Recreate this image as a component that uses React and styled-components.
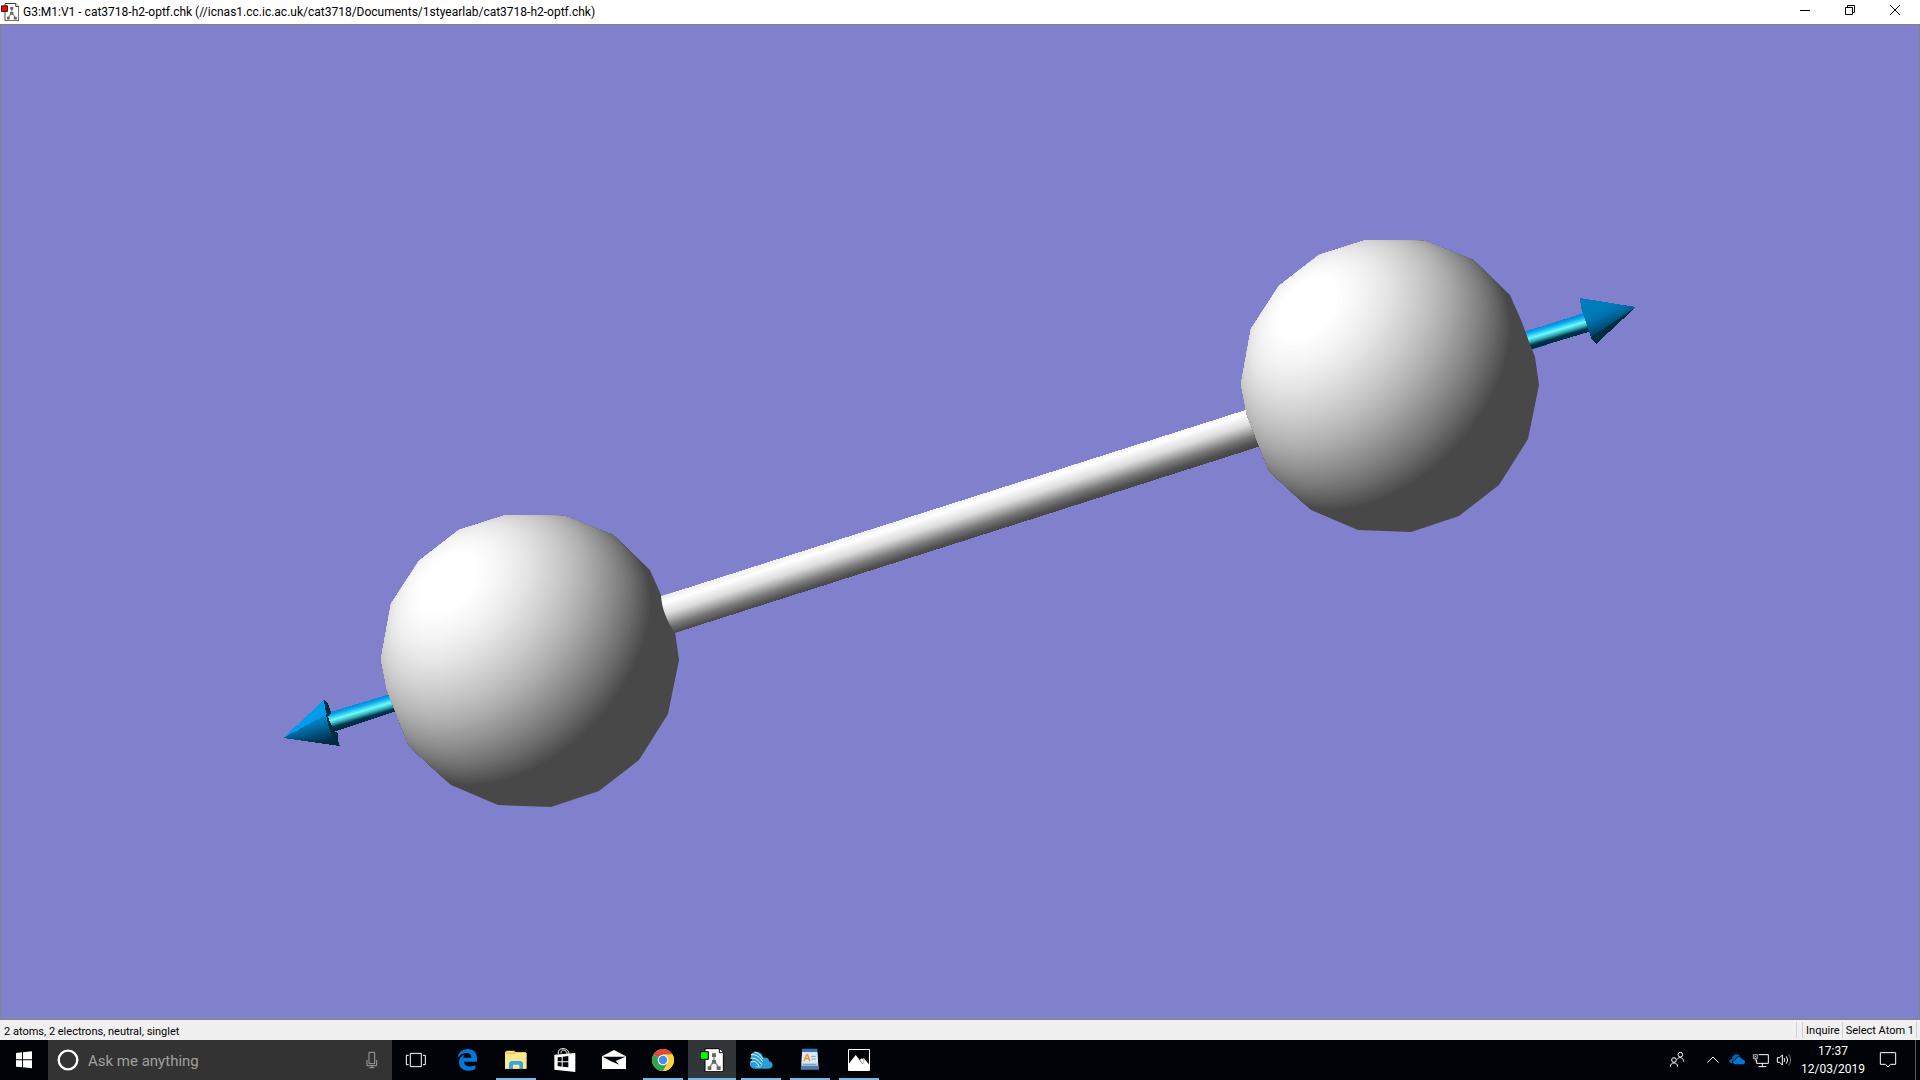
import React from 'react';
import styled, { createGlobalStyle } from 'styled-components';

const SPHERE_RADIUS = 152;
const LIGHT = [-0.56, -0.53, 0.64];
const SHADE_STEPS = 90;

const SPHERE_OUTLINE = [
    [-24, -146], [35, -145], [83, -126], [120, -91], [131, -66], [145, -29],
    [149, -1], [138, 53], [109, 99], [69, 130], [21, 146], [-32, 144],
    [-79, 124], [-121, 85], [-143, 29], [-149, -2], [-139, -57], [-111, -100], [-71, -131],
].map((point) => point.join(',')).join(' ');

// Outline of the part of a sphere whose normals lie within `angle` of the light
const capPath = (angle) => {
    const [lx, ly, lz] = LIGHT;
    const flat = Math.hypot(lx, ly);
    const u = [-ly / flat, lx / flat, 0];
    const v = [(-lz * lx) / flat, (-lz * ly) / flat, flat];
    const points = [];

    for (let i = 0; i < 120; i++) {
        const t = (i / 120) * Math.PI * 2;
        const n = [0, 1, 2].map(
            (k) => LIGHT[k] * Math.cos(angle) + (u[k] * Math.cos(t) + v[k] * Math.sin(t)) * Math.sin(angle)
        );
        const scale = n[2] < 0 ? 1 / Math.hypot(n[0], n[1]) : 1;
        points.push(`${(n[0] * scale * SPHERE_RADIUS).toFixed(1)} ${(n[1] * scale * SPHERE_RADIUS).toFixed(1)}`);
    }
    return `M${points.join('L')}Z`;
};

const CAPS = Array.from({ length: SHADE_STEPS }, (_, i) => {
    const level = (i + 1) / SHADE_STEPS;
    const grey = Math.round(72 + 183 * level);
    return { d: capPath(Math.acos(0.05 + level * 0.92)), fill: `rgb(${grey},${grey},${grey})` };
});

const Atom = ({ x, y }) => (
    <g transform={`translate(${x} ${y})`} clipPath="url(#atom)">
        <circle r="160" fill="#484848" />
        {CAPS.map((cap) => (
            <path key={cap.fill} d={cap.d} fill={cap.fill} />
        ))}
    </g>
);

const Molecule = () => (
    <Scene viewBox="1 25 1918 994" role="img" aria-label="Hydrogen molecule">
        <defs>
            <clipPath id="atom">
                <polygon points={SPHERE_OUTLINE} shapeRendering="crispEdges" />
            </clipPath>
            <linearGradient id="bond" gradientUnits="userSpaceOnUse" x1="920" y1="514" x2="932" y2="551">
                <stop offset="0" stopColor="#f0f0f0" />
                <stop offset="0.14" stopColor="#ffffff" />
                <stop offset="0.42" stopColor="#dcdcdc" />
                <stop offset="0.58" stopColor="#acacac" />
                <stop offset="0.74" stopColor="#787878" />
                <stop offset="0.92" stopColor="#505050" />
                <stop offset="1" stopColor="#484848" />
            </linearGradient>
            <linearGradient id="shaftLeft" gradientUnits="userSpaceOnUse" x1="331" y1="712" x2="336" y2="729">
                <stop offset="0" stopColor="#008cd8" />
                <stop offset="0.15" stopColor="#10a4ec" />
                <stop offset="0.45" stopColor="#64ffff" />
                <stop offset="0.65" stopColor="#3cacb4" />
                <stop offset="0.85" stopColor="#003450" />
                <stop offset="1" stopColor="#002c44" />
            </linearGradient>
            <linearGradient id="shaftRight" href="#shaftLeft" gradientTransform="translate(1195 -381)" />
            <linearGradient id="coneLeft" gradientUnits="userSpaceOnUse" x1="314" y1="715" x2="321" y2="743">
                <stop offset="0" stopColor="#0090dc" />
                <stop offset="0.35" stopColor="#0074b0" />
                <stop offset="1" stopColor="#002c44" />
            </linearGradient>
            <linearGradient id="coneRight" gradientUnits="userSpaceOnUse" x1="1600" y1="308" x2="1612" y2="334">
                <stop offset="0" stopColor="#007cbc" />
                <stop offset="0.3" stopColor="#0070ac" />
                <stop offset="1" stopColor="#002c44" />
            </linearGradient>
        </defs>

        <g shapeRendering="crispEdges">
            <polygon points="640,603 1280,399 1280,440 640,644" fill="url(#bond)" />
            <polygon points="324,714 400,691 400,710 330,733" fill="url(#shaftLeft)" />
            <polygon points="1515,335 1590,311 1595,330 1515,354" fill="url(#shaftRight)" />
            <polygon points="324,700 328,703 331,713 328,717 334,731 338,733 338,741 340,746 333,741 326,722" fill="#002c44" />
            <polygon points="283,738 324,700 325,711 329,728 334,740 340,746" fill="url(#coneLeft)" />
            <polygon points="283,738 324,700 325,708 327,714" fill="#009ceb" />
            <polygon points="1580,298 1636,307 1596,344 1591,338 1586,322 1581,308" fill="url(#coneRight)" />
            <polygon points="1636,307 1596,344 1591,337" fill="#002c44" />
        </g>
        <Atom x={530} y={661} />
        <Atom x={1390} y={386} />

        {/* the tubes poke slightly through the faceted spheres */}
        <path d="M661 596L678 591L690 628L675 633Q669 625 665 614Q662 607 661 596Z" fill="url(#bond)" />
        <path d="M1526 331L1540 327L1546 345L1533 349L1529 342Z" fill="url(#shaftRight)" />
    </Scene>
);

const MoleculeFile = ({ accent }) => (
    <>
        <path d="M135 38H178L190 50V107H135Z" fill="#fff" stroke="#000" strokeWidth="3" />
        <path d="M178 38V50H190" fill="#fff" stroke="#000" strokeWidth="3" />
        <path d="M162 57V78M162 72L149 95M162 72L176 95" stroke="#999" strokeWidth="5" fill="none" />
        <path d="M156 52H168V63H156ZM156 72H168V83H156ZM143 91H154V102H143ZM170 91H182V102H170Z" fill="#666" />
        <path d="M121 47H145V70H121Z" fill={accent} stroke="#000" strokeWidth="3" />
    </>
);

const apps = [
    {
        name: 'Microsoft Edge',
        viewBox: '45 36 72 72',
        icon: (
            <path
                fill="#0078d7"
                d="M52 68C54 50 66 39 84 39C102 39 111 52 111 68V77H72C73 92 92 95 106 87V99C84 110 57 104 57 79C57 66 66 59 74 56C71 59 70 63 70 65H94C94 53 84 50 76 51C64 53 56 60 52 68Z"
            />
        ),
    },
    {
        name: 'File Explorer',
        viewBox: '192 36 72 72',
        running: true,
        icon: (
            <>
                <path d="M195 48L199 44H223L227 48H258V98H195Z" fill="#f5c64f" />
                <path d="M201 46H220V49H201Z" fill="#fff3c4" />
                <path d="M195 54H224L228 51H260V98H195Z" fill="#ffe693" />
                <path d="M207 99V81L213 75H244L249 81V99H238V86H219V99Z" fill="#35a9df" />
            </>
        ),
    },
    {
        name: 'Store',
        viewBox: '338 36 72 72',
        icon: (
            <>
                <path d="M354 55C352 43 359 38 368 38C378 38 386 44 386 54M362 52C362 43 368 40 375 44C379 47 380 50 380 54" fill="none" stroke="#fff" strokeWidth="3" />
                <path d="M342 56L405 51V108L342 101Z" fill="#fff" />
                <path d="M352 64L364 63V76H352ZM367 62L384 60V76H367ZM352 79H364V92L352 90ZM367 79H384V94L367 92Z" fill="#000308" />
            </>
        ),
    },
    {
        name: 'Mail',
        viewBox: '486 36 72 72',
        icon: (
            <>
                <path d="M486 61L522 42L558 61V99H486Z" fill="#fff" />
                <path d="M488 62H557L527 75L538 86L513 76Z" fill="#000308" />
            </>
        ),
    },
    {
        name: 'Google Chrome',
        viewBox: '-36 -36 72 72',
        running: true,
        icon: (
            <>
                <circle r="33" fill="#fdd23e" />
                <path d="M0 0L-28.6 -16.5A33 33 0 0 1 28.6 -16.5H0Z" fill="#dc4a38" />
                <path d="M-28.6 -16.5A33 33 0 0 0 0 33L14 8L0 0Z" fill="#34a350" />
                <path d="M28.6 -16.5A33 33 0 0 1 0 33L14 8L0 -16Z" fill="#fdd23e" />
                <circle r="16" fill="#fff" />
                <circle r="12.5" fill="#4a8af4" />
            </>
        ),
    },
    {
        name: 'GaussView',
        viewBox: '120 36 72 72',
        running: true,
        active: true,
        icon: <MoleculeFile accent="#00ff00" />,
    },
    {
        name: 'Cloud Storage',
        viewBox: '267 36 72 72',
        running: true,
        icon: (
            <>
                <path d="M284 98C266 96 266 76 277 73C265 55 279 44 291 48C303 48 308 57 309 65C320 62 327 67 328 76C342 79 341 98 326 98Z" fill="#2a9fd2" />
                <path d="M272 78C286 73 291 80 297 91M271 67C287 64 296 73 303 84M273 56C290 54 300 65 308 77M284 48C296 51 304 60 308 69" fill="none" stroke="#e4f6ff" strokeWidth="3" />
                <path d="M289 91C300 98 309 88 303 80" fill="none" stroke="#8fd5f2" strokeWidth="3" />
            </>
        ),
    },
    {
        name: 'WordPad',
        viewBox: '414 36 72 72',
        running: true,
        icon: (
            <>
                <path d="M427 40H471L476 99H423Z" fill="#b9d6ea" />
                <path d="M426 38H472V48H426Z" fill="#3975b6" />
                <path d="M426 49H472L474 82H425Z" fill="#dceaf5" />
                <path d="M430 76L438 55H444L452 76H447L445 70H436L434 76ZM438 66H444L441 58Z" fill="#f28a24" fillRule="evenodd" />
                <path d="M453 61H467M455 69H468" stroke="#4b83bd" strokeWidth="2" />
                <path d="M423 89H476L477 101H422Z" fill="#4f7da9" />
                <path d="M429 85H469" stroke="#7098bc" strokeWidth="3" />
            </>
        ),
    },
    {
        name: 'Photos',
        viewBox: '561 36 72 72',
        running: true,
        icon: (
            <>
                <path d="M565.5 40.5H628.5V103.5H565.5Z" fill="#000308" stroke="#fff" strokeWidth="3" />
                <path d="M566 84L587 57L604 78L611 66L628 86V103H566Z" fill="#fff" />
                <path d="M599 71L606 66L612 74L608 84Z" fill="#fff" stroke="#000308" strokeWidth="1" />
            </>
        ),
    },
];

const trayItems = [
    {
        name: 'People',
        width: 48,
        viewBox: '75 114 72 72',
        icon: (
            <g fill="none" stroke="#fff" strokeWidth="3">
                <circle cx="102" cy="150" r="7" />
                <path d="M91 170C91 155 113 155 113 170" />
                <circle cx="121" cy="134" r="7" />
                <path d="M112 147C119 139 131 143 131 155" />
            </g>
        ),
    },
    {
        name: 'Show hidden icons',
        width: 24,
        viewBox: '183 114 72 72',
        icon: <path d="M202 158L219 141L236 158" fill="none" stroke="#fff" strokeWidth="3" />,
    },
    {
        name: 'OneDrive',
        width: 24,
        viewBox: '255 114 72 72',
        icon: (
            <>
                <path d="M275 160C264 159 266 146 276 147C277 132 293 128 301 140C291 138 286 143 285 149C276 149 275 156 278 160Z" fill="#0067b8" />
                <path d="M286 163C276 162 277 150 287 151C289 138 304 138 307 149C318 148 318 163 307 163Z" fill="#0078d7" />
            </>
        ),
    },
    {
        name: 'Network',
        width: 24,
        viewBox: '327 114 72 72',
        icon: (
            <g fill="none" stroke="#fff" strokeWidth="3">
                <path d="M356 134H385V160H350V149M367 160V170M355 170H379" />
                <path d="M340 134H352V146H340ZM343 137L349 143M349 137L343 143M346 146V153" strokeWidth="2" />
            </g>
        ),
    },
    {
        name: 'Volume',
        width: 24,
        viewBox: '399 114 72 72',
        icon: (
            <g fill="none" stroke="#fff" strokeWidth="3">
                <path d="M412 143H419L427 135V165L419 157H412Z" />
                <path d="M432 144Q437 150 432 156M439 139Q447 150 439 161" />
                <path d="M446 133Q458 150 446 167" stroke="#777" />
            </g>
        ),
    },
];

const App = () => {
    return (
        <Desktop>
            <GlobalStyle />
            <TitleBar>
                <Title>
                    <FileIcon viewBox="119 36 72 72" aria-hidden="true">
                        <MoleculeFile accent="#ff0000" />
                    </FileIcon>
                    <h1>G3:M1:V1 - cat3718-h2-optf.chk (//icnas1.cc.ic.ac.uk/cat3718/Documents/1styearlab/cat3718-h2-optf.chk)</h1>
                </Title>
                <WindowControls>
                    <WindowButton aria-label="Minimize">
                        <ControlIcon viewBox="0 0 10 10"><path d="M0 5.5H10" /></ControlIcon>
                    </WindowButton>
                    <WindowButton aria-label="Restore">
                        <ControlIcon viewBox="0 0 10 10"><path d="M.5 2.5H7.5V9.5H.5ZM2.5 2.5V.5H9.5V7.5H7.5" /></ControlIcon>
                    </WindowButton>
                    <WindowButton aria-label="Close">
                        <ControlIcon viewBox="0 0 10 10"><path d="M0 0L10 10M10 0L0 10" /></ControlIcon>
                    </WindowButton>
                </WindowControls>
            </TitleBar>

            <Viewport>
                <Molecule />
            </Viewport>

            <StatusBar>
                <StatusText>2 atoms, 2 electrons, neutral, singlet</StatusText>
                <StatusPanel />
                <StatusPanel>Inquire</StatusPanel>
                <StatusPanel>Select Atom 1</StatusPanel>
                <StatusEnd />
            </StatusBar>

            <Taskbar>
                <TaskButton aria-label="Start">
                    <TaskIcon viewBox="36 114 72 72">
                        <path d="M48 129L66 127V148H48ZM69 127L96 124V148H69ZM48 151H66V172L48 170ZM69 151H96V175L69 172Z" fill="#fff" />
                    </TaskIcon>
                </TaskButton>
                <SearchBox>
                    <TaskIcon viewBox="168 114 72 72" aria-hidden="true">
                        <circle cx="204" cy="150" r="28" fill="none" stroke="#fff" strokeWidth="7" />
                    </TaskIcon>
                    <SearchInput aria-label="Search" placeholder="Ask me anything" />
                    <MicButton aria-label="Speak">
                        <TaskIcon viewBox="1079 114 72 72">
                            <path d="M1106 127H1123V161H1106ZM1100 150V167H1129V150M1115 167V173M1107 173H1122" fill="none" stroke="#a0a0a0" strokeWidth="3" />
                        </TaskIcon>
                    </MicButton>
                </SearchBox>
                <TaskButton aria-label="Task View">
                    <TaskIcon viewBox="1212 114 72 72">
                        <path d="M1231 130H1264V170H1231ZM1226 136H1219V164H1226M1269 136H1276V164H1269" fill="none" stroke="#fff" strokeWidth="3" />
                    </TaskIcon>
                </TaskButton>
                <AppList>
                    {apps.map((app) => (
                        <AppButton key={app.name} aria-label={app.name} $running={app.running} $active={app.active}>
                            <TaskIcon viewBox={app.viewBox}>{app.icon}</TaskIcon>
                        </AppButton>
                    ))}
                </AppList>
                <Tray>
                    {trayItems.map((item) => (
                        <TrayButton key={item.name} aria-label={item.name} $width={item.width}>
                            <TaskIcon viewBox={item.viewBox}>{item.icon}</TaskIcon>
                        </TrayButton>
                    ))}
                    <Clock>
                        <span>17:37</span>
                        <span>12/03/2019</span>
                    </Clock>
                    <TrayButton aria-label="Action Center" $width={38}>
                        <TaskIcon viewBox="705 114 72 72">
                            <path d="M718 128H764V163H748L741 171L734 163H718Z" fill="none" stroke="#fff" strokeWidth="3" />
                        </TaskIcon>
                    </TrayButton>
                    <ShowDesktop aria-label="Show desktop" />
                </Tray>
            </Taskbar>
        </Desktop>
    );
};

export default App;

const GlobalStyle = createGlobalStyle`
    * {
        box-sizing: border-box;
    }

    body {
        margin: 0;
        font-family: Roboto, "Open Sans", sans-serif;
    }

    button {
        padding: 0;
        border: 0;
        background: transparent;
        font: inherit;
        color: inherit;
    }
`;

const Desktop = styled.div`
    display: flex;
    flex-direction: column;
    height: 100vh;
    background: #8080cc;
`;

const TitleBar = styled.header`
    display: flex;
    justify-content: space-between;
    flex: none;
    height: 24px;
    background: #fff;
    color: #000;
`;

const Title = styled.div`
    display: flex;
    align-items: center;
    gap: 4px;
    padding-left: 1px;

    h1 {
        margin: 0;
        font-size: 12px;
        font-weight: 400;
        line-height: 24px;
        white-space: nowrap;
    }
`;

const FileIcon = styled.svg`
    width: 18px;
    height: 18px;
`;

const WindowControls = styled.div`
    display: flex;
    align-items: flex-start;
    padding-right: 3px;
`;

const WindowButton = styled.button`
    display: flex;
    align-items: center;
    justify-content: center;
    width: 45px;
    height: 20px;
`;

const ControlIcon = styled.svg`
    width: 10px;
    height: 10px;
    fill: none;
    stroke: #000;
    stroke-width: 1;
`;

const Viewport = styled.main`
    display: flex;
    flex: 1;
    min-height: 0;
    border: 1px solid #848484;
    background: #8080cc;
`;

const Scene = styled.svg`
    display: block;
    width: 100%;
    height: 100%;
`;

const StatusBar = styled.footer`
    display: flex;
    align-items: center;
    flex: none;
    height: 20px;
    padding-right: 3px;
    background: #f0f0f0;
    color: #000;
    font-size: 11px;
    line-height: 16px;
`;

const StatusText = styled.span`
    flex: 1;
    padding: 3px 4px 0;
`;

const StatusPanel = styled.span`
    height: 16px;
    padding: 1px 2px 0 3px;
    border-left: 1px solid #d0d0d0;
    white-space: nowrap;
`;

const StatusEnd = styled.span`
    height: 16px;
    border-left: 1px solid #d0d0d0;
`;

const Taskbar = styled.nav`
    display: flex;
    flex: none;
    height: 40px;
    background: #000308;
    color: #fff;
`;

const TaskButton = styled.button`
    display: flex;
    align-items: center;
    justify-content: center;
    flex: none;
    width: 48px;
    height: 40px;
`;

const TaskIcon = styled.svg`
    flex: none;
    width: 24px;
    height: 24px;
`;

const SearchBox = styled.label`
    display: flex;
    align-items: center;
    gap: 8px;
    width: 344px;
    padding: 0 8px;
    background: #333;
`;

const SearchInput = styled.input`
    flex: 1;
    min-width: 0;
    padding: 2px 0 0;
    border: 0;
    outline: 0;
    background: transparent;
    color: #fff;
    font: 15px Roboto, "Open Sans", sans-serif;

    &::placeholder {
        color: #a0a0a0;
        opacity: 1;
    }
`;

const MicButton = styled.button`
    display: flex;
`;

const AppList = styled.div`
    display: flex;
    gap: 1px;
    flex: 1;
    padding-left: 3px;
`;

const AppButton = styled(TaskButton)`
    background: ${({ $active }) => ($active ? '#333639' : 'transparent')};
    background-image: ${({ $running }) => ($running ? 'linear-gradient(#76b9ed, #76b9ed)' : 'none')};
    background-size: ${({ $active }) => ($active ? '100%' : '40px')} 2px;
    background-position: bottom center;
    background-repeat: no-repeat;
`;

const Tray = styled.div`
    display: flex;
    align-items: center;
`;

const TrayButton = styled.button`
    display: flex;
    align-items: center;
    justify-content: center;
    width: ${({ $width }) => $width}px;
    height: 40px;
`;

const Clock = styled.button`
    display: flex;
    flex-direction: column;
    align-items: center;
    width: 72px;

    && {
        font-size: 12px;
        line-height: 18px;
    }
`;

const ShowDesktop = styled.button`
    width: 5px;
    height: 40px;
    margin-left: 8px;

    && {
        border-left: 1px solid #55585c;
    }
`;
